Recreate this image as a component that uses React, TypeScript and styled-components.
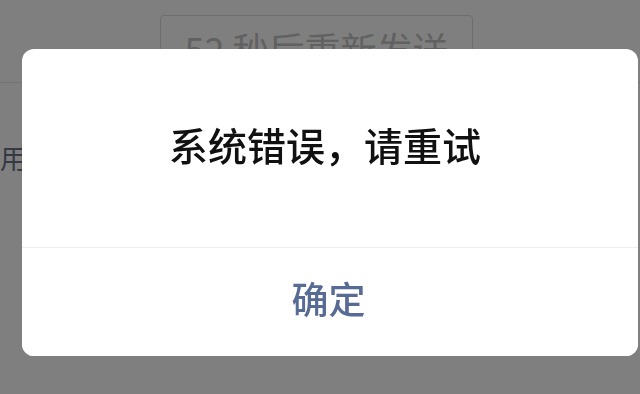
import React from "react";
import styled, { createGlobalStyle } from "styled-components";

const GlobalStyle = createGlobalStyle`
  html, body {
    margin: 0;
    padding: 0;
    background: #ffffff;
    font-family: "Noto Sans CJK SC", "Noto Sans", sans-serif;
  }
`;

const Page = styled.div`
  width: 640px;
  height: 394px;
  overflow: hidden;
  display: flex;
  flex-direction: column;
  background: #ffffff;
`;

const ResendRow = styled.div`
  display: flex;
  padding: 15px 0 0 160px;
  height: 82px;
  box-sizing: border-box;
`;

const ResendButton = styled.button`
  width: 313px;
  height: 64px;
  border: 1px solid #dcdcdc;
  border-radius: 4px;
  background: #ffffff;
  color: #c2c2c2;
  font-family: inherit;
  font-size: 36px;
  line-height: 64px;
  padding: 0;
`;

const Divider = styled.div`
  height: 1px;
  background: #e6e6e6;
`;

const FieldRow = styled.div`
  display: flex;
  align-items: center;
  height: 148px;
  font-size: 27px;
  color: #6a7386;
`;

const Overlay = styled.div`
  position: fixed;
  inset: 0;
  background: rgba(0, 0, 0, 0.5);
  display: flex;
  align-items: flex-start;
  padding: 49px 2px 0 22px;
`;

const Dialog = styled.div`
  flex: 1;
  height: 307px;
  background: #ffffff;
  border-radius: 12px;
  display: flex;
  flex-direction: column;
  overflow: hidden;
`;

const Body = styled.div`
  height: 199px;
  display: flex;
  align-items: center;
  justify-content: center;
  padding: 0 10px 8px 0;
  box-sizing: border-box;
  font-size: 39px;
  font-weight: 500;
  color: #111111;
  border-bottom: 1px solid #efefef;
`;

const Footer = styled.button`
  flex: 1;
  border: none;
  background: #ffffff;
  color: #576b95;
  font-family: inherit;
  font-size: 37px;
  font-weight: 500;
  padding: 0 3px 8px 0;
`;

export default function App() {
  return (
    <>
      <GlobalStyle />
      <Page>
        <ResendRow>
          <ResendButton disabled>52 秒后重新发送</ResendButton>
        </ResendRow>
        <Divider />
        <FieldRow>用</FieldRow>
      </Page>
      <Overlay>
        <Dialog>
          <Body>系统错误，请重试</Body>
          <Footer>确定</Footer>
        </Dialog>
      </Overlay>
    </>
  );
}
